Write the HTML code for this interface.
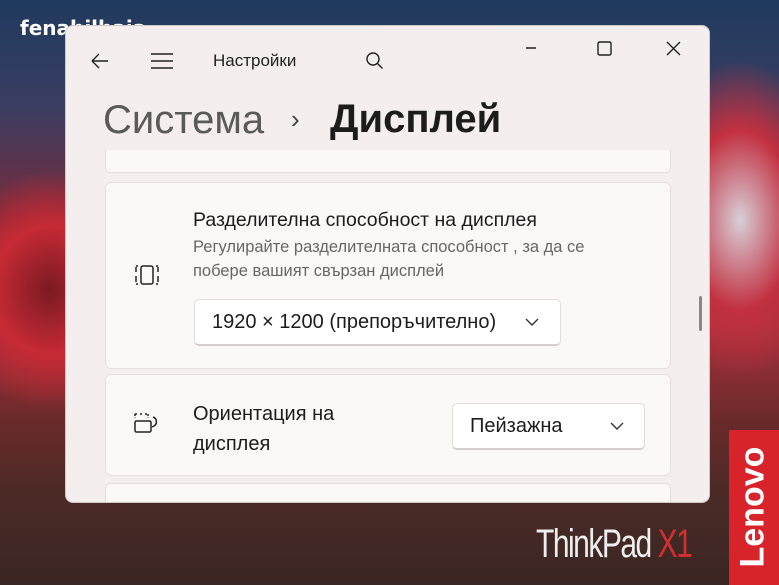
<!DOCTYPE html>
<html><head><meta charset="utf-8"><style>
*{margin:0;padding:0;box-sizing:border-box}
body{width:779px;height:585px;overflow:hidden;position:relative;font-family:"Liberation Sans","DejaVu Sans",sans-serif;
background:
radial-gradient(ellipse 140px 160px at 50px 290px,#7a1a22 0%,#c62a35 40%,rgba(200,40,50,0) 75%),
radial-gradient(ellipse 120px 200px at 740px 220px,#d8cfd8 0%,#c23040 45%,rgba(180,40,50,0) 80%),
linear-gradient(180deg,#1f3a5e 0%,#3a3e62 18%,#7a2a3a 38%,#a8303c 55%,#6a2a2a 72%,#4a2a26 85%,#3a2622 100%);}
.wm{position:absolute;left:20px;top:16px;color:#fff;font-weight:bold;font-size:20px;font-family:"DejaVu Sans",sans-serif}
.win{position:absolute;left:65px;top:25px;width:645px;height:478px;background:#f4eeee;border-radius:8px;overflow:hidden;border:1px solid #cfc6c6}
.card{position:absolute;left:39px;width:566px;background:#fbf8f8;border:1px solid #e6dfdf;border-radius:6px}
.t{position:absolute;color:#1c1c1c;white-space:nowrap}
.dd{position:absolute;background:#fff;border:1px solid #e2dcdc;border-bottom:2px solid #d4cece;border-radius:5px;font-size:20px;color:#1c1c1c}
.dd svg{position:absolute;top:18px}
.lenovo{position:absolute;left:729px;top:430px;width:50px;height:155px;background:#d8232a}
</style></head><body>
<div class="wm">fenabilbaia</div>
<div class="lenovo"><div style="position:absolute;left:-46px;top:48px;transform:rotate(-90deg);color:#fff;font-size:34px;font-weight:bold;width:140px">Lenovo</div></div>
<div style="position:absolute;left:536px;top:522px;color:#eee;font-size:40px;font-family:'Liberation Sans Narrow','Liberation Sans',sans-serif;letter-spacing:-2px;transform:scaleX(.75);transform-origin:left">ThinkPad <span style="color:#d03030">X1</span></div>
<div class="win">
<svg style="position:absolute;left:0;top:0" width="645" height="80" fill="none" stroke="#222" stroke-width="1.4">
<path d="M26 35h16M26 35l7-7M26 35l7 7"/>
<path d="M85 28h22M85 35h22M85 42h22"/>
<circle cx="307" cy="33" r="6"/><path d="M311.5 37.5l5 5"/>
<path d="M460 22h10"/>
<rect x="532" y="16" width="13" height="13" rx="1.5"/>
<path d="M601 16l13 13M614 16l-13 13"/>
</svg>
<div class="t" style="left:147px;top:25px;font-size:17px;color:#222">Настройки</div>
<div class="t" style="left:37px;top:72px;font-size:40px;color:#5a5a5a">Система</div>
<div class="t" style="left:225px;top:78px;font-size:26px;color:#444">›</div>
<div class="t" style="left:264px;top:71px;font-size:40px;font-weight:bold;color:#1c1c1c">Дисплей</div>
<div class="card" style="top:124px;height:23px;border-top:none;border-radius:0 0 6px 6px"></div>
<div class="card" style="top:156px;height:187px">
<svg style="position:absolute;left:27px;top:80px" width="32" height="28" fill="none" stroke="#222" stroke-width="1.5"><path d="M3 4v5M3 13v6M5 3H3M5 21H3"/><rect x="8" y="3" width="12" height="18" rx="2"/><path d="M25 4v5M25 13v6M23 3h2M23 21h2"/></svg>
<div class="t" style="left:87px;top:26px;font-size:19.5px">Разделителна способност на дисплея</div>
<div class="t" style="left:87px;top:52px;font-size:16.5px;color:#666;line-height:24px">Регулирайте разделителната способност , за да се<br>побере вашият свързан дисплей</div>
<div class="dd" style="left:88px;top:116px;width:367px;height:47px;padding:11px 0 0 17px">1920 × 1200 (препоръчително)<svg style="left:330px" width="14" height="8" fill="none" stroke="#333" stroke-width="1.4"><path d="M1 1l6 6 6-6"/></svg></div>
</div>
<div class="card" style="top:348px;height:102px">
<svg style="position:absolute;left:27px;top:36px" width="32" height="28" fill="none" stroke="#222" stroke-width="1.5"><path d="M2 3h3M7 3h3M12 3h3M2 3v4M15 3v4" stroke-dasharray="2 1.5"/><rect x="2" y="10" width="16" height="11" rx="1.5"/><path d="M20 6a5 5 0 0 1 1 9l-2 1"/></svg>
<div class="t" style="left:87px;top:24px;font-size:20px;line-height:30px">Ориентация на<br>дисплея</div>
<div class="dd" style="left:346px;top:28px;width:193px;height:47px;padding:11px 0 0 17px">Пейзажна<svg style="left:157px" width="14" height="8" fill="none" stroke="#333" stroke-width="1.4"><path d="M1 1l6 6 6-6"/></svg></div>
</div>
<div class="card" style="top:457px;height:40px"></div>
<div style="position:absolute;left:633px;top:270px;width:3px;height:35px;background:#888;border-radius:2px"></div>
</div>
</body></html>
